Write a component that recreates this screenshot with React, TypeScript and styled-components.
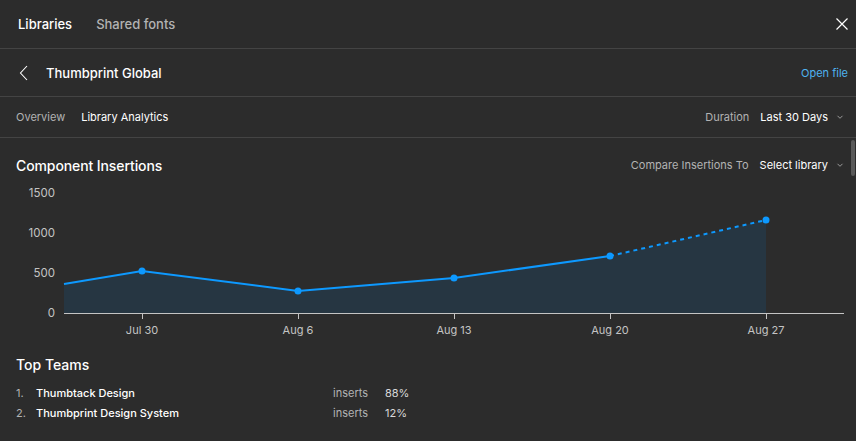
import React from "react";
import styled, { createGlobalStyle } from "styled-components";

const Global = createGlobalStyle`
  html, body { margin: 0; padding: 0; background: #2c2c2c; }
  body { font-family: Inter, "Noto Sans", sans-serif; color: #fff; -webkit-font-smoothing: antialiased; }
  * { box-sizing: border-box; }
`;

const Page = styled.div`
  width: 856px;
  height: 441px;
  background: #2c2c2c;
  position: relative;
  overflow: hidden;
`;

const TopBar = styled.div`
  height: 49px;
  border-bottom: 1px solid #444;
  display: flex;
  align-items: center;
  padding: 0 2px 0 18px;
  gap: 24px;
`;

const TopTab = styled.div<{ $active?: boolean }>`
  font-size: 13px;
  font-weight: 500;
  color: ${(p) => (p.$active ? "#ffffff" : "#b3b3b3")};
`;

const Spacer = styled.div`
  flex: 1;
`;

const IconButton = styled.button`
  background: none;
  border: none;
  padding: 0;
  width: 24px;
  height: 24px;
  display: flex;
  align-items: center;
  justify-content: center;
  color: #fff;
`;

const HeaderRow = styled.div`
  height: 48px;
  border-bottom: 1px solid #444;
  display: flex;
  align-items: center;
  padding: 0 8px 0 12px;
`;

const Title = styled.div`
  font-size: 13px;
  font-weight: 500;
  margin-left: 10px;
`;

const LinkText = styled.a`
  font-size: 11px;
  color: #4fb3f0;
  text-decoration: none;
`;

const TabsRow = styled.div`
  height: 41px;
  border-bottom: 1px solid #444;
  display: flex;
  align-items: center;
  padding: 0 12px 0 16px;
  gap: 16px;
`;

const SubTab = styled.div<{ $active?: boolean }>`
  font-size: 11px;
  color: ${(p) => (p.$active ? "#ffffff" : "#b3b3b3")};
`;

const DropGroup = styled.div`
  display: flex;
  align-items: center;
  font-size: 11px;
`;

const DropLabel = styled.span`
  color: #b3b3b3;
  margin-right: 11px;
`;

const DropValue = styled.span`
  color: #fff;
  margin-right: 8px;
`;

const SectionHeader = styled.div`
  height: 48px;
  padding: 6px 12px 0 16px;
  display: flex;
  align-items: center;
`;

const SectionTitle = styled.div`
  font-size: 14px;
  font-weight: 500;
  letter-spacing: -0.1px;
`;

const ChartSvg = styled.svg`
  display: block;
  overflow: visible;
`;

const TeamsTitle = styled.div`
  margin: 13px 0 0 16px;
  font-size: 14px;
  font-weight: 500;
  line-height: 20px;
`;

const TeamList = styled.div`
  margin: 8px 0 0 16px;
  display: grid;
  grid-template-columns: 20px 297px 52px auto;
  grid-auto-rows: 20px;
  align-items: center;
  font-size: 11px;
`;

const Num = styled.span`
  color: #b3b3b3;
`;

const Name = styled.span`
  color: #fff;
  font-weight: 500;
`;

const Muted = styled.span`
  color: #b3b3b3;
`;

const Pct = styled.span`
  color: #d9d9d9;
`;

const Scrollbar = styled.div`
  position: absolute;
  right: 1px;
  top: 140px;
  width: 4px;
  height: 36px;
  border-radius: 2px;
  background: #5a5a5a;
`;

const Chevron = () => (
  <svg width="8" height="6" viewBox="0 0 8 6" style={{ display: "block" }}>
    <path d="M1.5 1.8 L4 4.3 L6.5 1.8" stroke="#9a9a9a" strokeWidth="1" fill="none" />
  </svg>
);

const OFFSET = 186;
const yOf = (v: number) => 127 - v * 0.08;
const points = [
  { x: 64, y: 284 - OFFSET, dot: false },
  { x: 142, y: 271 - OFFSET, dot: true },
  { x: 298, y: 291 - OFFSET, dot: true },
  { x: 454, y: 278 - OFFSET, dot: true },
  { x: 610, y: 256 - OFFSET, dot: true },
  { x: 766, y: 220 - OFFSET, dot: true },
];
const ticks = [
  { x: 142, label: "Jul 30" },
  { x: 298, label: "Aug 6" },
  { x: 454, label: "Aug 13" },
  { x: 610, label: "Aug 20" },
  { x: 766, label: "Aug 27" },
];

const Chart = () => {
  const solid = points.slice(0, 5);
  const last = points[5];
  const solidPath = solid.map((p, i) => `${i ? "L" : "M"}${p.x} ${p.y}`).join(" ");
  const area = `${points.map((p, i) => `${i ? "L" : "M"}${p.x} ${p.y}`).join(" ")} L766 127 L64 127 Z`;
  return (
    <ChartSvg width={856} height={156} viewBox="0 0 856 156">
      {[0, 500, 1000, 1500].map((v) => (
        <text
          key={v}
          x={55}
          y={yOf(v) + 4}
          textAnchor="end"
          fontSize={11.5}
          fill="#c4c4c4"
          fontFamily="Inter, sans-serif"
        >
          {v}
        </text>
      ))}
      <path d={area} fill="#263642" />
      <path d={solidPath} stroke="#0d99ff" strokeWidth={2} fill="none" />
      <path
        d={`M${solid[4].x} ${solid[4].y} L${last.x} ${last.y}`}
        stroke="#0d99ff"
        strokeWidth={2}
        strokeDasharray="4 4"
        fill="none"
      />
      {points.filter((p) => p.dot).map((p) => (
        <circle key={p.x} cx={p.x} cy={p.y} r={3.5} fill="#0d99ff" />
      ))}
      <line x1={64} y1={127.5} x2={844} y2={127.5} stroke="#c4c4c4" strokeWidth={1} />
      {ticks.map((t) => (
        <g key={t.x}>
          <line x1={t.x + 0.5} y1={127} x2={t.x + 0.5} y2={133} stroke="#c4c4c4" strokeWidth={1} />
          <text
            x={t.x}
            y={148}
            textAnchor="middle"
            fontSize={11}
            fill="#c4c4c4"
            fontFamily="Inter, sans-serif"
          >
            {t.label}
          </text>
        </g>
      ))}
    </ChartSvg>
  );
};

export default function App() {
  return (
    <Page>
      <Global />
      <TopBar>
        <TopTab $active>Libraries</TopTab>
        <TopTab>Shared fonts</TopTab>
        <Spacer />
        <IconButton aria-label="Close">
          <svg width="14" height="14" viewBox="0 0 14 14">
            <path d="M1.5 1.5 L12.5 12.5 M12.5 1.5 L1.5 12.5" stroke="#fff" strokeWidth="1.2" />
          </svg>
        </IconButton>
      </TopBar>
      <HeaderRow>
        <IconButton aria-label="Back">
          <svg width="10" height="16" viewBox="0 0 10 16">
            <path d="M8 1 L1.5 8 L8 15" stroke="#fff" strokeWidth="1.1" fill="none" />
          </svg>
        </IconButton>
        <Title>Thumbprint Global</Title>
        <Spacer />
        <LinkText>Open file</LinkText>
      </HeaderRow>
      <TabsRow>
        <SubTab>Overview</SubTab>
        <SubTab $active>Library Analytics</SubTab>
        <Spacer />
        <DropGroup>
          <DropLabel>Duration</DropLabel>
          <DropValue>Last 30 Days</DropValue>
          <Chevron />
        </DropGroup>
      </TabsRow>
      <SectionHeader>
        <SectionTitle>Component Insertions</SectionTitle>
        <Spacer />
        <DropGroup>
          <DropLabel>Compare Insertions To</DropLabel>
          <DropValue>Select library</DropValue>
          <Chevron />
        </DropGroup>
      </SectionHeader>
      <Chart />
      <TeamsTitle>Top Teams</TeamsTitle>
      <TeamList>
        <Num>1.</Num>
        <Name>Thumbtack Design</Name>
        <Muted>inserts</Muted>
        <Pct>88%</Pct>
        <Num>2.</Num>
        <Name>Thumbprint Design System</Name>
        <Muted>inserts</Muted>
        <Pct>12%</Pct>
      </TeamList>
      <Scrollbar />
    </Page>
  );
}
